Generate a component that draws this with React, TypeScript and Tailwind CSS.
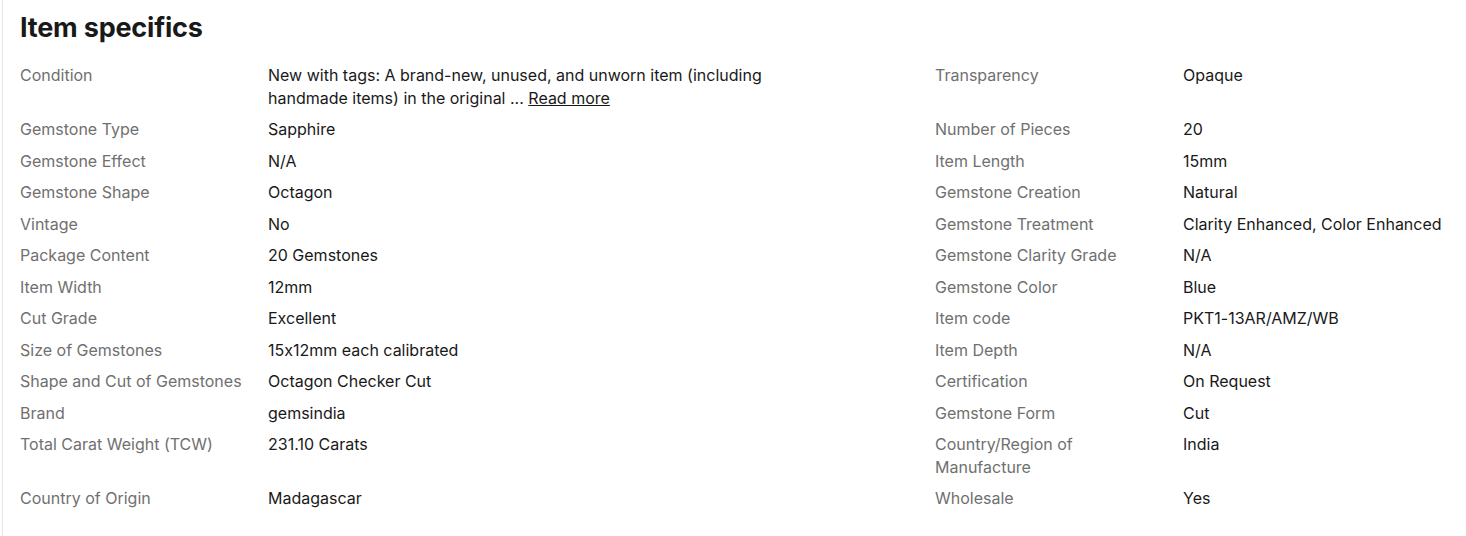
import type { ReactNode } from "react";

const left: [string, ReactNode][] = [
  [
    "Condition",
    <>
      <span className="block">
        New with tags: A brand-new, unused, and unworn item (including
      </span>
      <span className="block">
        handmade items) in the original ...{" "}
        <a className="underline cursor-pointer">Read more</a>
      </span>
    </>,
  ],
  ["Gemstone Type", "Sapphire"],
  ["Gemstone Effect", "N/A"],
  ["Gemstone Shape", "Octagon"],
  ["Vintage", "No"],
  ["Package Content", "20 Gemstones"],
  ["Item Width", "12mm"],
  ["Cut Grade", "Excellent"],
  ["Size of Gemstones", "15x12mm each calibrated"],
  ["Shape and Cut of Gemstones", "Octagon Checker Cut"],
  ["Brand", "gemsindia"],
  ["Total Carat Weight (TCW)", "231.10 Carats"],
  ["Country of Origin", "Madagascar"],
];

const right: [ReactNode, string][] = [
  ["Transparency", "Opaque"],
  ["Number of Pieces", "20"],
  ["Item Length", "15mm"],
  ["Gemstone Creation", "Natural"],
  ["Gemstone Treatment", "Clarity Enhanced, Color Enhanced"],
  ["Gemstone Clarity Grade", "N/A"],
  ["Gemstone Color", "Blue"],
  ["Item code", "PKT1-13AR/AMZ/WB"],
  ["Item Depth", "N/A"],
  ["Certification", "On Request"],
  ["Gemstone Form", "Cut"],
  [
    <>
      <span className="block">Country/Region of</span>
      <span className="block">Manufacture</span>
    </>,
    "India",
  ],
  ["Wholesale", "Yes"],
];

export default function App() {
  return (
    <div
      className="h-[536px] w-[1466px] bg-white overflow-hidden [font-feature-settings:'calt'_0]"
      style={{ fontFamily: "Inter, 'Liberation Sans', sans-serif" }}
    >
      <div className="ml-[2px] h-full border-l border-[#e5e5e5] pl-[17px] pt-[11px]">
        <h2 className="text-[27px] font-bold leading-[34px] text-[#191919] tracking-[-0.2px]">
          Item specifics
        </h2>
        <div className="mt-[19px] text-[16px] leading-[22.5px]">
          {left.map(([ll, lv], i) => (
            <div key={i} className="flex pb-[9px]">
              <div className="w-[248px] shrink-0 pr-4 text-[#707070]">{ll}</div>
              <div className="w-[667px] shrink-0 pr-4 text-[#191919]">{lv}</div>
              <div className="w-[248px] shrink-0 pr-4 text-[#707070]">{right[i][0]}</div>
              <div className="flex-1 whitespace-nowrap text-[#191919]">{right[i][1]}</div>
            </div>
          ))}
        </div>
      </div>
    </div>
  );
}
